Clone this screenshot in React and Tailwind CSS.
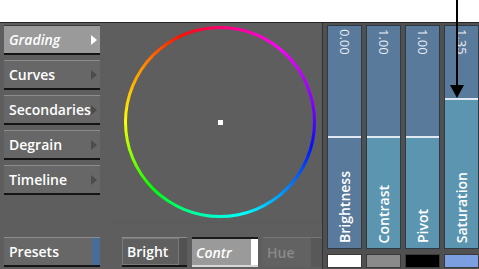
import React from 'react'

const font = { fontFamily: '"Open Sans", "DejaVu Sans", sans-serif' }

function MenuButton({ label, active }) {
  return (
    <div
      className={`h-[30px] w-[96px] flex items-center justify-between pl-[5px] pr-[3px] border-t border-b-2 border-b-[#141414] ${
        active ? 'bg-[#9a9a9a] border-t-[#3a3a3a]' : 'bg-[#676767] border-t-[#8c8c8c]'
      }`}
    >
      <span className={`text-[14px] font-semibold text-white ${active ? 'italic' : ''}`}>{label}</span>
      <span
        className={`w-0 h-0 border-t-[5px] border-b-[5px] border-l-[6px] border-t-transparent border-b-transparent ${
          active ? 'border-l-white' : 'border-l-[#4c4c4c]'
        }`}
      />
    </div>
  )
}

const sliders = [
  { value: '0.00', label: 'Brightness', fillTop: 110, lower: 'bg-[#5a7a9b]', swatch: 'bg-white' },
  { value: '1.00', label: 'Contrast', fillTop: 110, lower: 'bg-[#5b95b0]', swatch: 'bg-[#8a8a8a]' },
  { value: '1.00', label: 'Pivot', fillTop: 110, lower: 'bg-[#5b95b0]', swatch: 'bg-black' },
  { value: '1.35', label: 'Saturation', fillTop: 72, lower: 'bg-[#5b95b0]', swatch: 'bg-[#7b9fe0]' },
]

function Slider({ s }) {
  return (
    <div className="flex flex-col w-[35px]">
      <div className="h-[224px] flex flex-col border border-[#2e3a46] bg-[#5a7a9b]">
        <div className="flex justify-center pt-[3px]" style={{ height: s.fillTop }}>
          <span className="[writing-mode:vertical-rl] text-[13px] leading-none text-[#e6eef6]">{s.value}</span>
        </div>
        <div className="h-[2px] bg-[#dfe8f0]" />
        <div className={`flex-1 flex flex-col justify-end items-center pb-[5px] ${s.lower}`}>
          <span className="[writing-mode:vertical-rl] rotate-180 text-[14px] font-semibold leading-none text-white">{s.label}</span>
        </div>
      </div>
      <div className={`mt-[5px] h-[14px] border border-[#3a3a3a] ${s.swatch}`} />
    </div>
  )
}

export default function App() {
  return (
    <div className="w-[479px] h-[269px] bg-white relative overflow-hidden" style={font}>
      <div className="h-[22px]" />
      <div className="h-[247px] bg-[#5e5e5e] border-t border-[#262626] flex">
        {/* left menu */}
        <div className="w-[104px] pl-[4px] pt-[2px] pb-[2px] flex flex-col">
          <div className="flex flex-col gap-[5px]">
            <MenuButton label="Grading" active />
            <MenuButton label="Curves" />
            <MenuButton label="Secondaries" />
            <MenuButton label="Degrain" />
            <MenuButton label="Timeline" />
          </div>
          <div className="mt-auto flex h-[30px] w-[96px] border-t border-[#8c8c8c] border-b-2 border-b-[#141414]">
            <div className="flex-1 bg-[#676767] flex items-center pl-[5px]">
              <span className="text-[14px] font-semibold text-white">Presets</span>
            </div>
            <div className="w-[8px] bg-[#4a6c9c]" />
          </div>
        </div>

        {/* colour wheel */}
        <div className="w-[218px] flex flex-col pb-[2px]">
          <div className="h-[200px] ml-[4px] border-r border-b border-[#5a5a5a] flex pt-[3px] pl-[16px]">
            <div className="w-[192px] h-[192px] rounded-full p-[3px] bg-[conic-gradient(#ff0070_0deg,#ff00ff_40deg,#8000ff_80deg,#0010ff_105deg,#00ffff_165deg,#00ff90_200deg,#00ff00_225deg,#ffff00_270deg,#ff9000_305deg,#ff1000_335deg,#ff0070_360deg)]">
              <div className="w-full h-full rounded-full bg-[#5e5e5e] flex items-center justify-center">
                <div className="w-[5px] h-[5px] bg-white" />
              </div>
            </div>
          </div>
          <div className="mt-auto flex gap-[5px] pl-[18px]">
            <div className="flex h-[30px] w-[65px] border-t border-[#8c8c8c] border-b-2 border-b-[#141414]">
              <div className="flex-1 bg-[#5f5f5f] border border-[#7a7a7a] flex items-center pl-[4px]">
                <span className="text-[14px] font-semibold text-white">Bright</span>
              </div>
              <div className="w-[8px] bg-[#525252]" />
            </div>
            <div className="flex h-[30px] w-[66px] border-t-2 border-[#1a1a1a] border-b-2 border-b-[#d8d8d8]">
              <div className="flex-1 bg-[#9a9a9a] flex items-center pl-[4px]">
                <span className="text-[14px] font-semibold italic text-white">Contr</span>
              </div>
              <div className="w-[7px] bg-white" />
            </div>
            <div className="flex h-[30px] w-[59px] border-t border-[#767676]">
              <div className="flex-1 bg-[#626262] flex items-center pl-[4px]">
                <span className="text-[14px] font-semibold text-[#8a8a8a]">Hue</span>
              </div>
              <div className="w-[11px] bg-[#585858]" />
            </div>
          </div>
        </div>

        {/* sliders */}
        <div className="flex-1 flex gap-[4px] pl-[4px] pt-[2px] border-l border-[#333] bg-[#505050]">
          {sliders.map((s) => (
            <Slider key={s.label} s={s} />
          ))}
        </div>
      </div>

      {/* annotation arrow */}
      <div className="absolute left-[456px] top-0 w-[2px] h-[88px] bg-black" />
      <div className="absolute left-[450px] top-[85px] w-0 h-0 border-l-[7px] border-r-[7px] border-t-[13px] border-l-transparent border-r-transparent border-t-black" />
    </div>
  )
}
